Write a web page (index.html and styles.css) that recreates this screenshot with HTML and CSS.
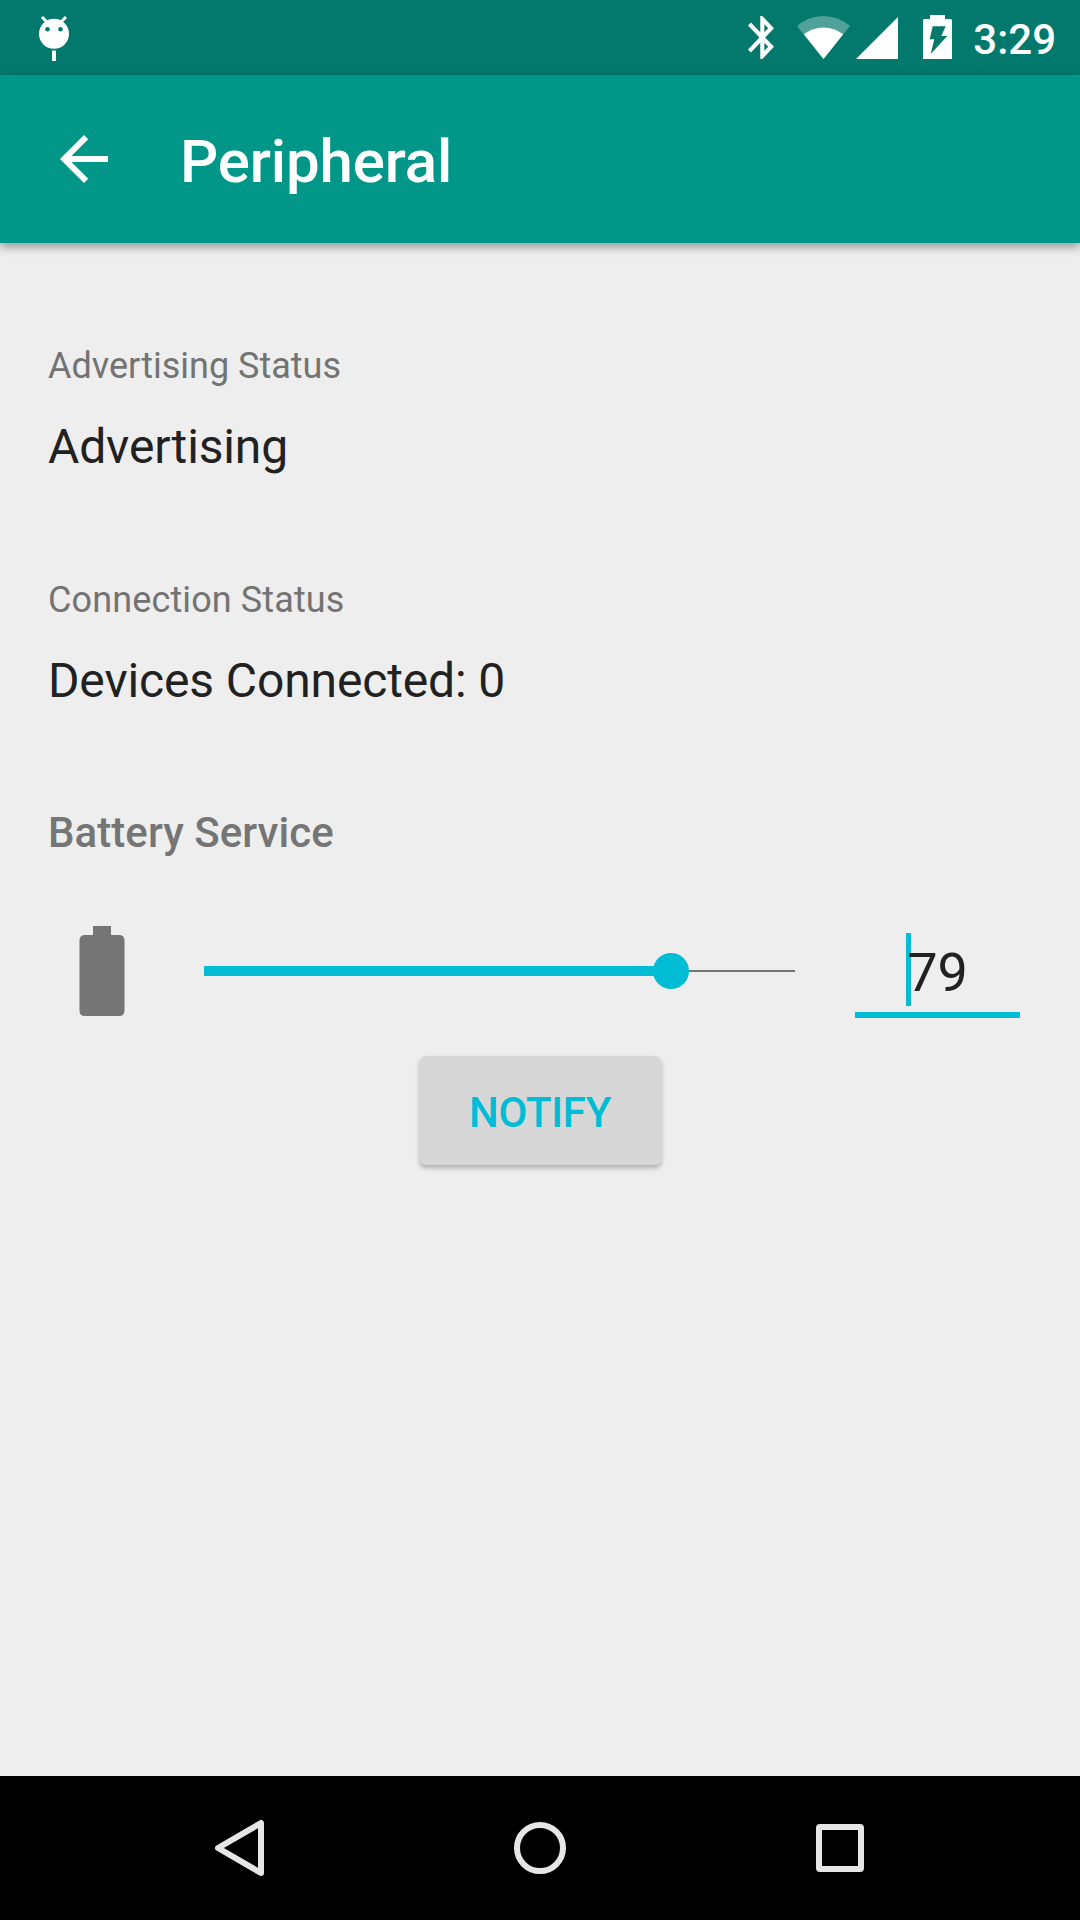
FILE: index.html
```html
<!DOCTYPE html>
<html lang="en">
<head>
<meta charset="utf-8">
<title>Peripheral</title>
<link rel="stylesheet" href="styles.css">
</head>
<body>
<div class="screen">
  <header class="status-bar">
    <svg class="debug-icon" viewBox="39 14 30 48" width="30" height="48">
      <path d="M42 17l5 5M66 17l-5 5" stroke="#fff" stroke-width="3" fill="none"/>
      <circle cx="54" cy="33.8" r="15" fill="#fff"/>
      <circle cx="47.5" cy="29.2" r="2.3" fill="#00796b"/>
      <circle cx="60.5" cy="29.2" r="2.3" fill="#00796b"/>
      <path d="M52 50.5h4V61h-4z" fill="#fff"/>
    </svg>
    <div class="status-icons">
      <svg class="bluetooth-icon" viewBox="5 2 12.71 20" width="26" height="43" preserveAspectRatio="none"><path fill="#fff" d="M17.71 7.71L12 2h-1v7.59L6.41 5 5 6.41 10.59 12 5 17.59 6.41 19 11 14.41V22h1l5.71-5.71-4.3-4.29 4.3-4.29zM13 5.83l1.88 1.88L13 9.59V5.83zm1.88 10.46L13 18.17v-3.76l1.88 1.88z"/></svg>
      <svg class="wifi-icon" viewBox="797 16 53 43" width="53" height="43">
        <path fill="#fff" fill-opacity=".3" d="M823.5 59L797 26Q808.500 16 823.500 16T850 26z"/>
        <path fill="#fff" d="M823.500 59L803.800 34.300Q813 27.600 823.500 27.600T843.200 34.300z"/>
      </svg>
      <svg class="signal-icon" viewBox="0 0 42 42" width="42" height="42"><path fill="#fff" d="M0 42h42V0z"/></svg>
      <svg class="charge-icon" viewBox="923 15 29 44" width="29" height="44"><path fill="#fff" fill-rule="evenodd" d="M930 15h15v4h5.500q1.500 0 1.500 1.500V59h-29V20.500q0-1.500 1.500-1.500H930zM932.700 26.300L929.700 39.300H934.300L930.700 54L947.300 36H941.300L945.700 26.300z"/></svg>
      <span class="clock">3:29</span>
    </div>
  </header>
  <div class="app-bar">
    <svg class="back-icon" viewBox="0 0 24 24" width="72" height="72"><path fill="#fff" d="M20 11H7.830l5.590-5.590L12 4l-8 8 8 8 1.410-1.410L7.830 13H20z"/></svg>
    <h1 class="title">Peripheral</h1>
  </div>
  <main class="content">
    <section class="field">
      <div class="label">Advertising Status</div>
      <div class="value">Advertising</div>
    </section>
    <section class="field">
      <div class="label label-wide">Connection Status</div>
      <div class="value">Devices Connected: 0</div>
    </section>
    <h2 class="service">Battery Service</h2>
    <div class="level-row">
      <svg class="battery-icon" viewBox="0 0 46 90" width="46" height="90"><path fill="#757575" d="M14 0h18v9h8q5.500 0 5.500 5.500v70q0 5.500-5.500 5.500H6Q.5 90 .5 84.500v-70Q.5 9 6 9h8z"/></svg>
      <div class="slider">
        <div class="slider-fill" style="width: 79%"></div>
        <div class="slider-thumb"></div>
        <div class="slider-rest"></div>
      </div>
      <div class="number-input">79<span class="caret"></span></div>
    </div>
    <button class="notify">NOTIFY</button>
  </main>
  <nav class="nav-bar">
    <svg class="nav-icon" viewBox="0 0 60 60" width="60" height="60"><path d="M51 5v50L8 30z" fill="none" stroke="#e6e6e6" stroke-width="6" stroke-linejoin="round"/></svg>
    <svg class="nav-icon" viewBox="0 0 60 60" width="60" height="60"><circle cx="30" cy="30" r="23" fill="none" stroke="#e6e6e6" stroke-width="6"/></svg>
    <svg class="nav-icon" viewBox="0 0 60 60" width="60" height="60"><path fill="#e6e6e6" fill-rule="evenodd" d="M10 6h40q4 0 4 4v40q0 4-4 4H10q-4 0-4-4V10q0-4 4-4zM12 12v36h36V12z"/></svg>
  </nav>
</div>
</body>
</html>
```
FILE: styles.css
```css
body {
  margin: 0;
  font-family: Roboto, sans-serif;
  background: #eee;
}

.screen {
  display: flex;
  flex-direction: column;
  width: 1080px;
  height: 1920px;
  background: #eee;
}

.status-bar {
  display: flex;
  justify-content: space-between;
  align-items: flex-start;
  box-sizing: border-box;
  height: 75px;
  padding: 14px 24px 0 39px;
  background: #03796d;
}

.status-icons {
  display: flex;
  align-items: flex-end;
  height: 45px;
}

.wifi-icon { margin-left: 23px; }
.signal-icon { margin-left: 6px; }
.charge-icon { margin-left: 25px; }

.clock {
  width: 84px;
  margin: 0 0 -8px 20px;
  font-size: 42px;
  font-weight: 500;
  line-height: 54px;
  color: #fff;
  text-align: right;
}

.app-bar {
  display: flex;
  align-items: center;
  box-sizing: border-box;
  height: 168px;
  padding: 0 48px;
  background: #009688;
  box-shadow: 0 4px 9px rgba(0, 0, 0, .36);
}

.title {
  margin: 6px 0 0 60px;
  font-size: 60px;
  font-weight: 500;
  line-height: 72px;
  letter-spacing: -.15px;
  color: #fff;
}

.content {
  display: flex;
  flex: 1;
  flex-direction: column;
  padding: 99px 48px 0;
}

.field { margin-bottom: 98px; }

.label {
  margin-bottom: 25px;
  font-size: 36px;
  line-height: 48px;
  color: #737373;
}

.label-wide { letter-spacing: .12px; }

.value {
  font-size: 48px;
  line-height: 63px;
  letter-spacing: -.13px;
  color: #212121;
}

.service {
  margin: -4px 0 51px;
  font-size: 42px;
  font-weight: 500;
  line-height: 54px;
  letter-spacing: .05px;
  color: #757575;
}

.level-row {
  display: flex;
  align-items: center;
  height: 120px;
  padding: 0 12px 0 31px;
}

.slider {
  display: flex;
  align-items: center;
  width: 591px;
  margin-left: 79px;
}

.slider-fill {
  height: 10px;
  margin-right: -18px;
  background: #00bcd4;
}

.slider-thumb {
  width: 36px;
  height: 36px;
  border-radius: 50%;
  background: #00bcd4;
}

.slider-rest {
  flex: 1;
  height: 2px;
  background: #737373;
}

.number-input {
  position: relative;
  box-sizing: border-box;
  width: 165px;
  height: 95px;
  margin: 0 0 1px 60px;
  padding-top: 18px;
  border-bottom: 6px solid #00bcd4;
  font-size: 54px;
  line-height: 63px;
  text-align: center;
  color: #212121;
}

.caret {
  position: absolute;
  top: 10px;
  left: 51px;
  z-index: -1;
  width: 5px;
  height: 73px;
  background: #00bcd4;
}

.number-input { z-index: 0; }

.notify {
  align-self: center;
  box-sizing: border-box;
  width: 241px;
  height: 109px;
  margin-top: 25px;
  padding: 5px 0 0;
  border: 0;
  border-radius: 6px;
  background: #d7d7d7;
  box-shadow: 0 3px 5px rgba(0, 0, 0, .28);
  font-family: inherit;
  font-size: 42px;
  font-weight: 500;
  line-height: 54px;
  letter-spacing: -.35px;
  color: #00bcd4;
}

.nav-bar {
  display: flex;
  justify-content: center;
  align-items: center;
  gap: 240px;
  height: 144px;
  background: #000;
}
```
